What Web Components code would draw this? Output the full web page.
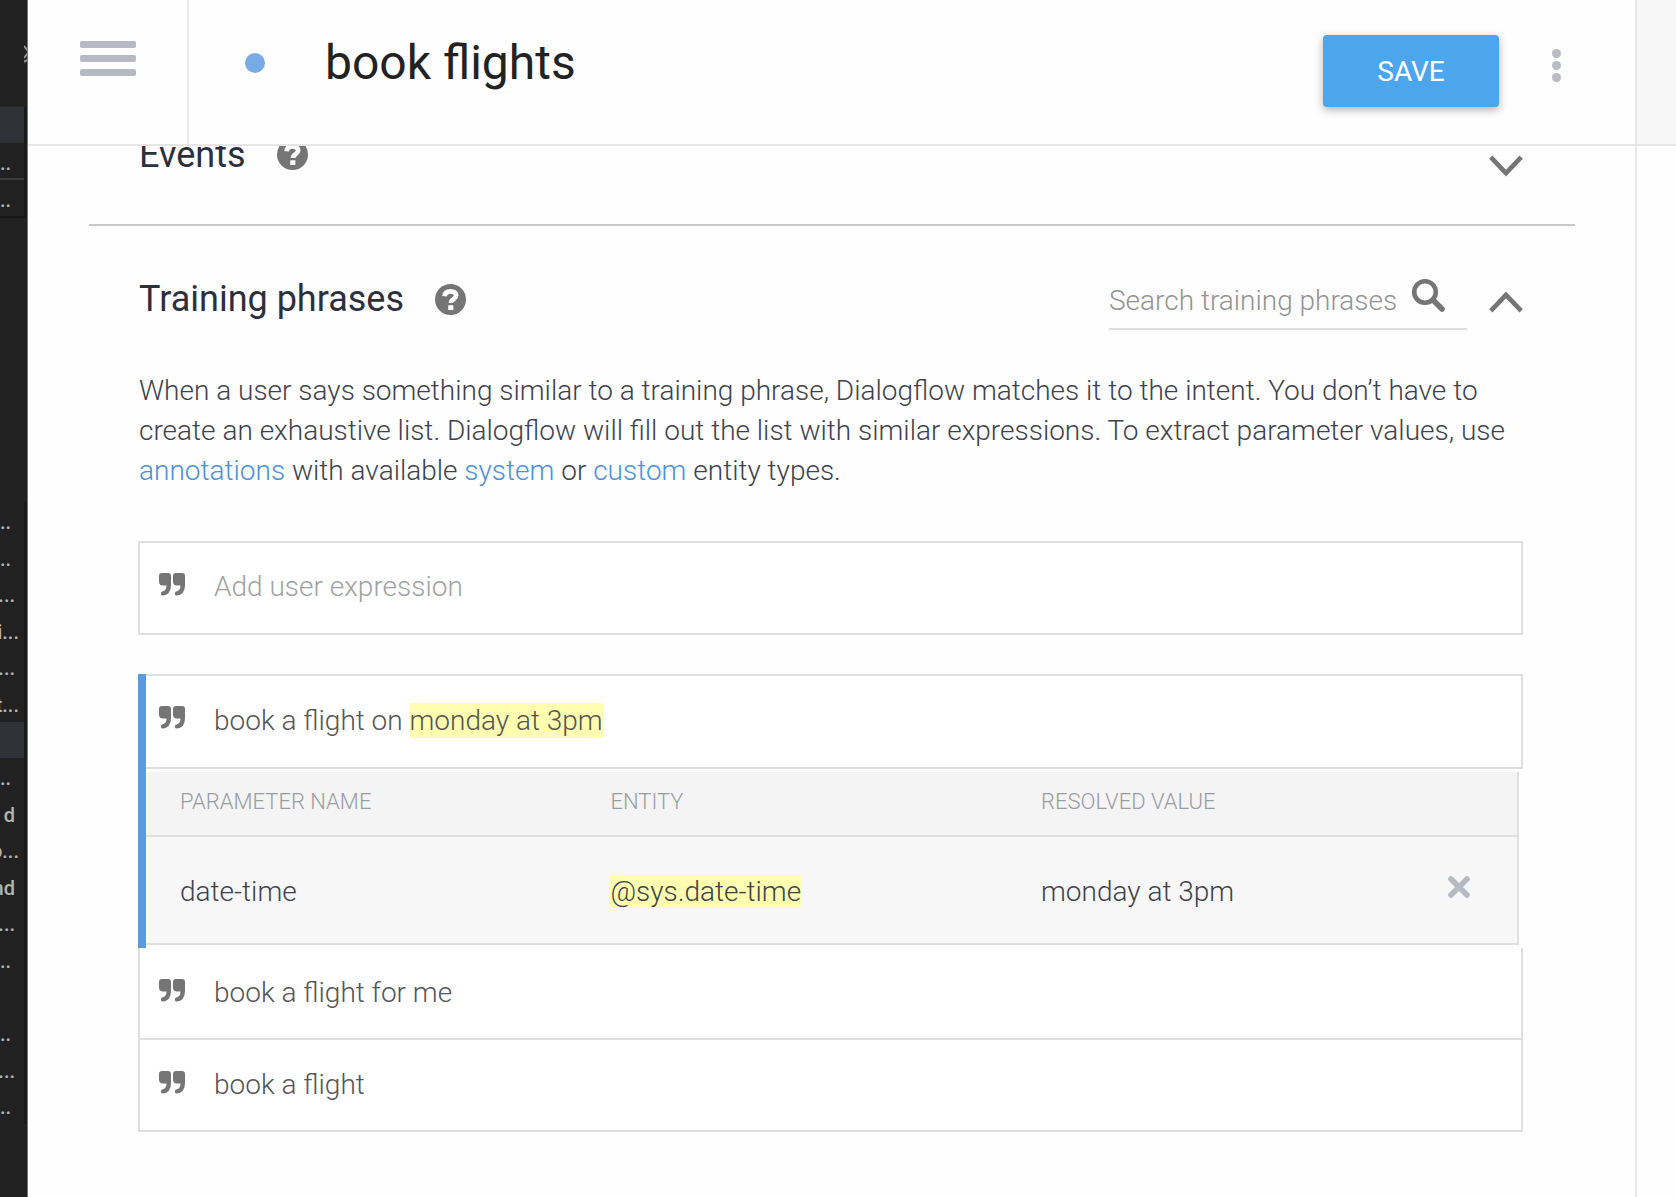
<!DOCTYPE html>
<html lang="en">
<head>
<meta charset="utf-8">
<title>book flights</title>
<style>
  html, body { margin: 0; height: 100%; }
  body { font-family: Roboto, "Liberation Sans", sans-serif; font-size: 28px; line-height: 40px; font-weight: 300; color: #3f424d; background: #fefefe; }
</style>
</head>
<body>
<intent-page></intent-page>

<script>
const define = (name, html) => {
  const template = document.createElement('template');
  template.innerHTML = '<style>*{box-sizing:border-box} button{font:inherit;border:0;padding:0;background:none;cursor:pointer} svg{display:block}</style>' + html;
  customElements.define(name, class extends HTMLElement {
    constructor() {
      super();
      this.attachShadow({ mode: 'open' }).append(template.content.cloneNode(true));
    }
  });
};

define('help-icon', `
<style>:host{display:block;width:31px;height:31px} button{display:block}</style>
<button aria-label="Help"><svg width="31" height="31" viewBox="0 0 31 31">
<circle cx="15.500" cy="15.500" r="15.500" fill="#757575"/>
<path d="M9.600 12.200C9.900 8.800 12.200 7.400 15.600 7.400c3.400 0 5.500 1.600 5.500 4.200 0 3.600-5.100 3.500-5.100 7.400" fill="none" stroke="#fff" stroke-width="4.800"/>
<rect x="13.200" y="21.200" width="5.200" height="4.800" rx=".6" fill="#fff"/></svg></button>`);

define('chevron-toggle', `
<style>:host{display:block;width:34px;align-self:flex-start;padding-top:23px} button{display:block} :host([open]) svg{transform:rotate(180deg)}</style>
<button aria-label="Toggle section"><svg width="34" height="22" viewBox="0 0 34 22">
<path d="M1.800 2.200 17 18.200 32.200 2.200" fill="none" stroke="#757575" stroke-width="4.600"/></svg></button>`);

define('quote-icon', `
<style>:host{display:block;width:26px;height:23px;flex:none}</style>
<svg width="26" height="23" viewBox="0 0 26 23" fill="#757575">
<path d="M3 0H9Q12 0 12 3V12Q12 22 3.500 22.500Q2 22.500 2 21V20Q2 18.700 3.400 18.500Q7.500 17.500 7.500 12.500H4Q0 12.500 0 8.500V3Q0 0 3 0Z"/>
<path d="M17 0H23Q26 0 26 3V12Q26 22 17.500 22.500Q16 22.500 16 21V20Q16 18.700 17.400 18.500Q21.500 17.500 21.500 12.500H18Q14 12.500 14 8.500V3Q14 0 17 0Z"/></svg>`);

define('file-sidebar', `
<style>
:host{display:flex;flex-direction:column;width:28px;flex:none;background:#212121;border-right:1px solid #777;overflow:hidden;font-size:20px;line-height:36px;font-weight:500;color:#b4b4b4;box-sizing:border-box}
.tools{height:107px;padding:44px 0 0 24px;flex:none}
ul{list-style:none;margin:0;padding:0;display:grid;grid-template-columns:minmax(0,1fr);border-right:3px solid #1a1a1a;flex:none}
.open{height:111px;grid-auto-rows:1fr}
.tree{height:622px;margin-top:284px;grid-auto-rows:1fr}
li{display:flex;min-height:0;min-width:0;justify-content:flex-end;white-space:nowrap;padding:2px 13px 0 0}
li.mid{padding-right:9px} li.far{padding-right:5px}
li.on{background:#313138}
li.line{border-bottom:2px solid #3d3d3d}
.open{border-bottom:2px solid #151515}
</style>
<div class="tools"><svg width="4" height="20" viewBox="0 0 4 20"><path d="M0 2 4 7M4 9 0 14M0 18 3 16" stroke="#999" stroke-width="2" fill="none"/></svg></div>
<ul class="open"><li class="on"></li><li class="line">..</li><li>..</li></ul>
<ul class="tree"><li>..</li><li>..</li><li class="mid">...</li><li class="far">i...</li><li class="mid">...</li><li class="far">t...</li><li class="on"></li><li>..</li><li class="mid">d</li><li class="far">o...</li><li class="mid">nd</li><li class="mid">...</li><li>...</li><li></li><li>...</li><li class="mid">...</li><li>...</li></ul>`);

define('intent-header', `
<style>
:host{display:flex;align-items:stretch;height:146px;box-sizing:border-box;border-bottom:2px solid #e6e6e6;flex:none}
.menu{width:161px;border-right:2px solid #ececec;padding:41px 0 0 52px}
.menu button{display:grid;gap:7px}
.menu i{display:block;width:56px;height:7px;border-radius:2px;background:#b7bac4}
.dot{width:20px;height:20px;border-radius:50%;background:#78abe4;margin:53px 0 0 56px}
h1{margin:35px auto 0 60px;font-size:48px;line-height:56px;font-weight:400;color:#222}
.save{width:176px;height:72px;margin-top:35px;padding-top:2px;border-radius:4px;background:#4ca6ed;color:#fff;font-weight:400;box-shadow:0 3px 8px rgba(0,0,0,.3)}
.more{display:grid;gap:3px;align-self:start;margin:49px 74px 0 53px}
.more i{display:block;width:9px;height:9px;border-radius:50%;background:#b8bac4}
</style>
<div class="menu"><button aria-label="Menu"><i></i><i></i><i></i></button></div>
<span class="dot"></span>
<h1><slot></slot></h1>
<button class="save">SAVE</button>
<button class="more" aria-label="More"><i></i><i></i><i></i></button>`);

define('intent-section', `
<style>
:host{display:block;padding:0 52px 0 49px}
header{display:flex;align-items:center}
h2{margin:0 31px 0 1px;font-size:36px;line-height:42px;font-weight:400;color:#2d303c}
.tools{margin-left:auto;display:flex;align-items:center;gap:22px}
</style>
<header><h2><slot name="title"></slot></h2><help-icon></help-icon><div class="tools"><slot name="tools"></slot></div></header>
<slot></slot>`);

define('phrase-search', `
<style>
:host{display:block}
label{display:flex;width:358px;height:62px;padding-top:6px;border-bottom:2px solid #dedede;align-items:center}
input{width:296px;border:0;outline:0;padding:0;margin:0;background:none;font:inherit;color:#555}
input::placeholder{color:#939393;opacity:1}
svg{margin:-13px 0 0 6px}
</style>
<label><input type="text" placeholder="Search training phrases" aria-label="Search training phrases">
<svg width="34" height="34" viewBox="0 0 34 34" fill="none" stroke="#757575"><circle cx="14" cy="14" r="10.800" stroke-width="4.600"/><path d="M22 22 31 31" stroke-width="5.600" stroke-linecap="round"/></svg></label>`);

define('phrase-input', `
<style>
:host{display:block}
label{display:flex;align-items:center;height:94px;border:2px solid #dfdfdf;padding:0 19px 2px;gap:29px;background:#fff}
quote-icon{margin-bottom:6px}
input{flex:1;min-width:0;border:0;outline:0;padding:0;font:inherit;background:none;color:#555}
input::placeholder{color:#a2a2a2;opacity:1}
</style>
<label><quote-icon></quote-icon><input type="text" placeholder="Add user expression" aria-label="Add user expression"></label>`);

define('phrase-row', `
<style>
:host{display:flex;align-items:center;height:92px;box-sizing:border-box;border:2px solid #dfdfdf;border-top:0;padding:0 19px;gap:29px;color:#555;background:#fff}
:host([active]){height:95px;border-top:2px solid #dfdfdf;border-left:0;padding:0 13px 2px}
quote-icon{margin-bottom:6px}
::slotted(span){display:block}
</style>
<quote-icon></quote-icon><slot></slot>`);

define('phrase-params', `
<style>
:host{display:block;margin:3px 4px 3px 0}
table{width:100%;table-layout:fixed;border-collapse:separate;border-spacing:0;text-align:left;border-right:2px solid #dfdfdf}
th,td{padding:0 0 0 34px;border-bottom:2px solid #dfdfdf}
th{height:65px;background:#f4f4f4;font-size:22px;line-height:26px;font-weight:300;color:#9a9ca3;padding-bottom:4px}
td{height:108px;background:#f7f7f7;padding-top:4px}
.col{width:31.4%} .act{width:116px}
th.act,td.act{padding-left:0}
td.act button{display:block;margin:0 auto 10px}
mark{background:#fffdaf;color:inherit}
</style>
<table><thead><tr><th class="col">PARAMETER NAME</th><th class="col">ENTITY</th><th>RESOLVED VALUE</th><th class="act"></th></tr></thead>
<tbody><tr><td>date-time</td><td><mark>@sys.date-time</mark></td><td>monday at 3pm</td>
<td class="act"><button aria-label="Delete"><svg width="22" height="22" viewBox="0 0 22 22"><path d="M3 3 19 19M19 3 3 19" stroke="#b7bac3" stroke-width="5.600" stroke-linecap="round"/></svg></button></td></tr></tbody></table>`);

define('phrase-group', `
<style>:host{display:flow-root;border-left:8px solid #589ddb}</style><slot></slot>`);

define('intent-page', `
<style>
:host{display:flex;min-height:100vh}
main{flex:1;min-width:0;display:flex;flex-direction:column}
.scroll{flex:1;overflow:hidden}
.content{margin-top:-14px;padding:0 60px 64px 61px}
hr{border:0;border-top:2px solid #cbc6c8;margin:47px 0 42px}
p{margin:41px 0 50px;padding-left:1px}
a{color:#4b91d8;text-decoration:none}
mark{background:#fffdaf;color:inherit;padding:1px 0}
.list{margin-top:39px}
aside{width:41px;border-left:2px solid #e8e8e8;flex:none}
aside div{height:146px;box-sizing:border-box;border-bottom:2px solid #e6e6e6;background:#f7f7f7}
</style>
<file-sidebar></file-sidebar>
<main>
<intent-header>book flights</intent-header>
<div class="scroll"><div class="content">
<intent-section><span slot="title">Events</span><chevron-toggle slot="tools"></chevron-toggle></intent-section>
<hr>
<intent-section><span slot="title">Training phrases</span><phrase-search slot="tools"></phrase-search><chevron-toggle open slot="tools"></chevron-toggle>
<p>When a user says something similar to a training phrase, Dialogflow matches it to the intent. You don’t have to create an exhaustive list. Dialogflow will fill out the list with similar expressions. To extract parameter values, use <a href="#annotations">annotations</a> with available <a href="#system">system</a> or <a href="#custom">custom</a> entity types.</p>
<phrase-input></phrase-input>
<div class="list">
<phrase-group><phrase-row active><span>book a flight on <mark>monday at 3pm</mark></span></phrase-row><phrase-params></phrase-params></phrase-group>
<phrase-row><span>book a flight for me</span></phrase-row>
<phrase-row><span>book a flight</span></phrase-row>
</div>
</intent-section>
</div></div>
</main>
<aside><div></div></aside>`);
</script>
</body>
</html>
